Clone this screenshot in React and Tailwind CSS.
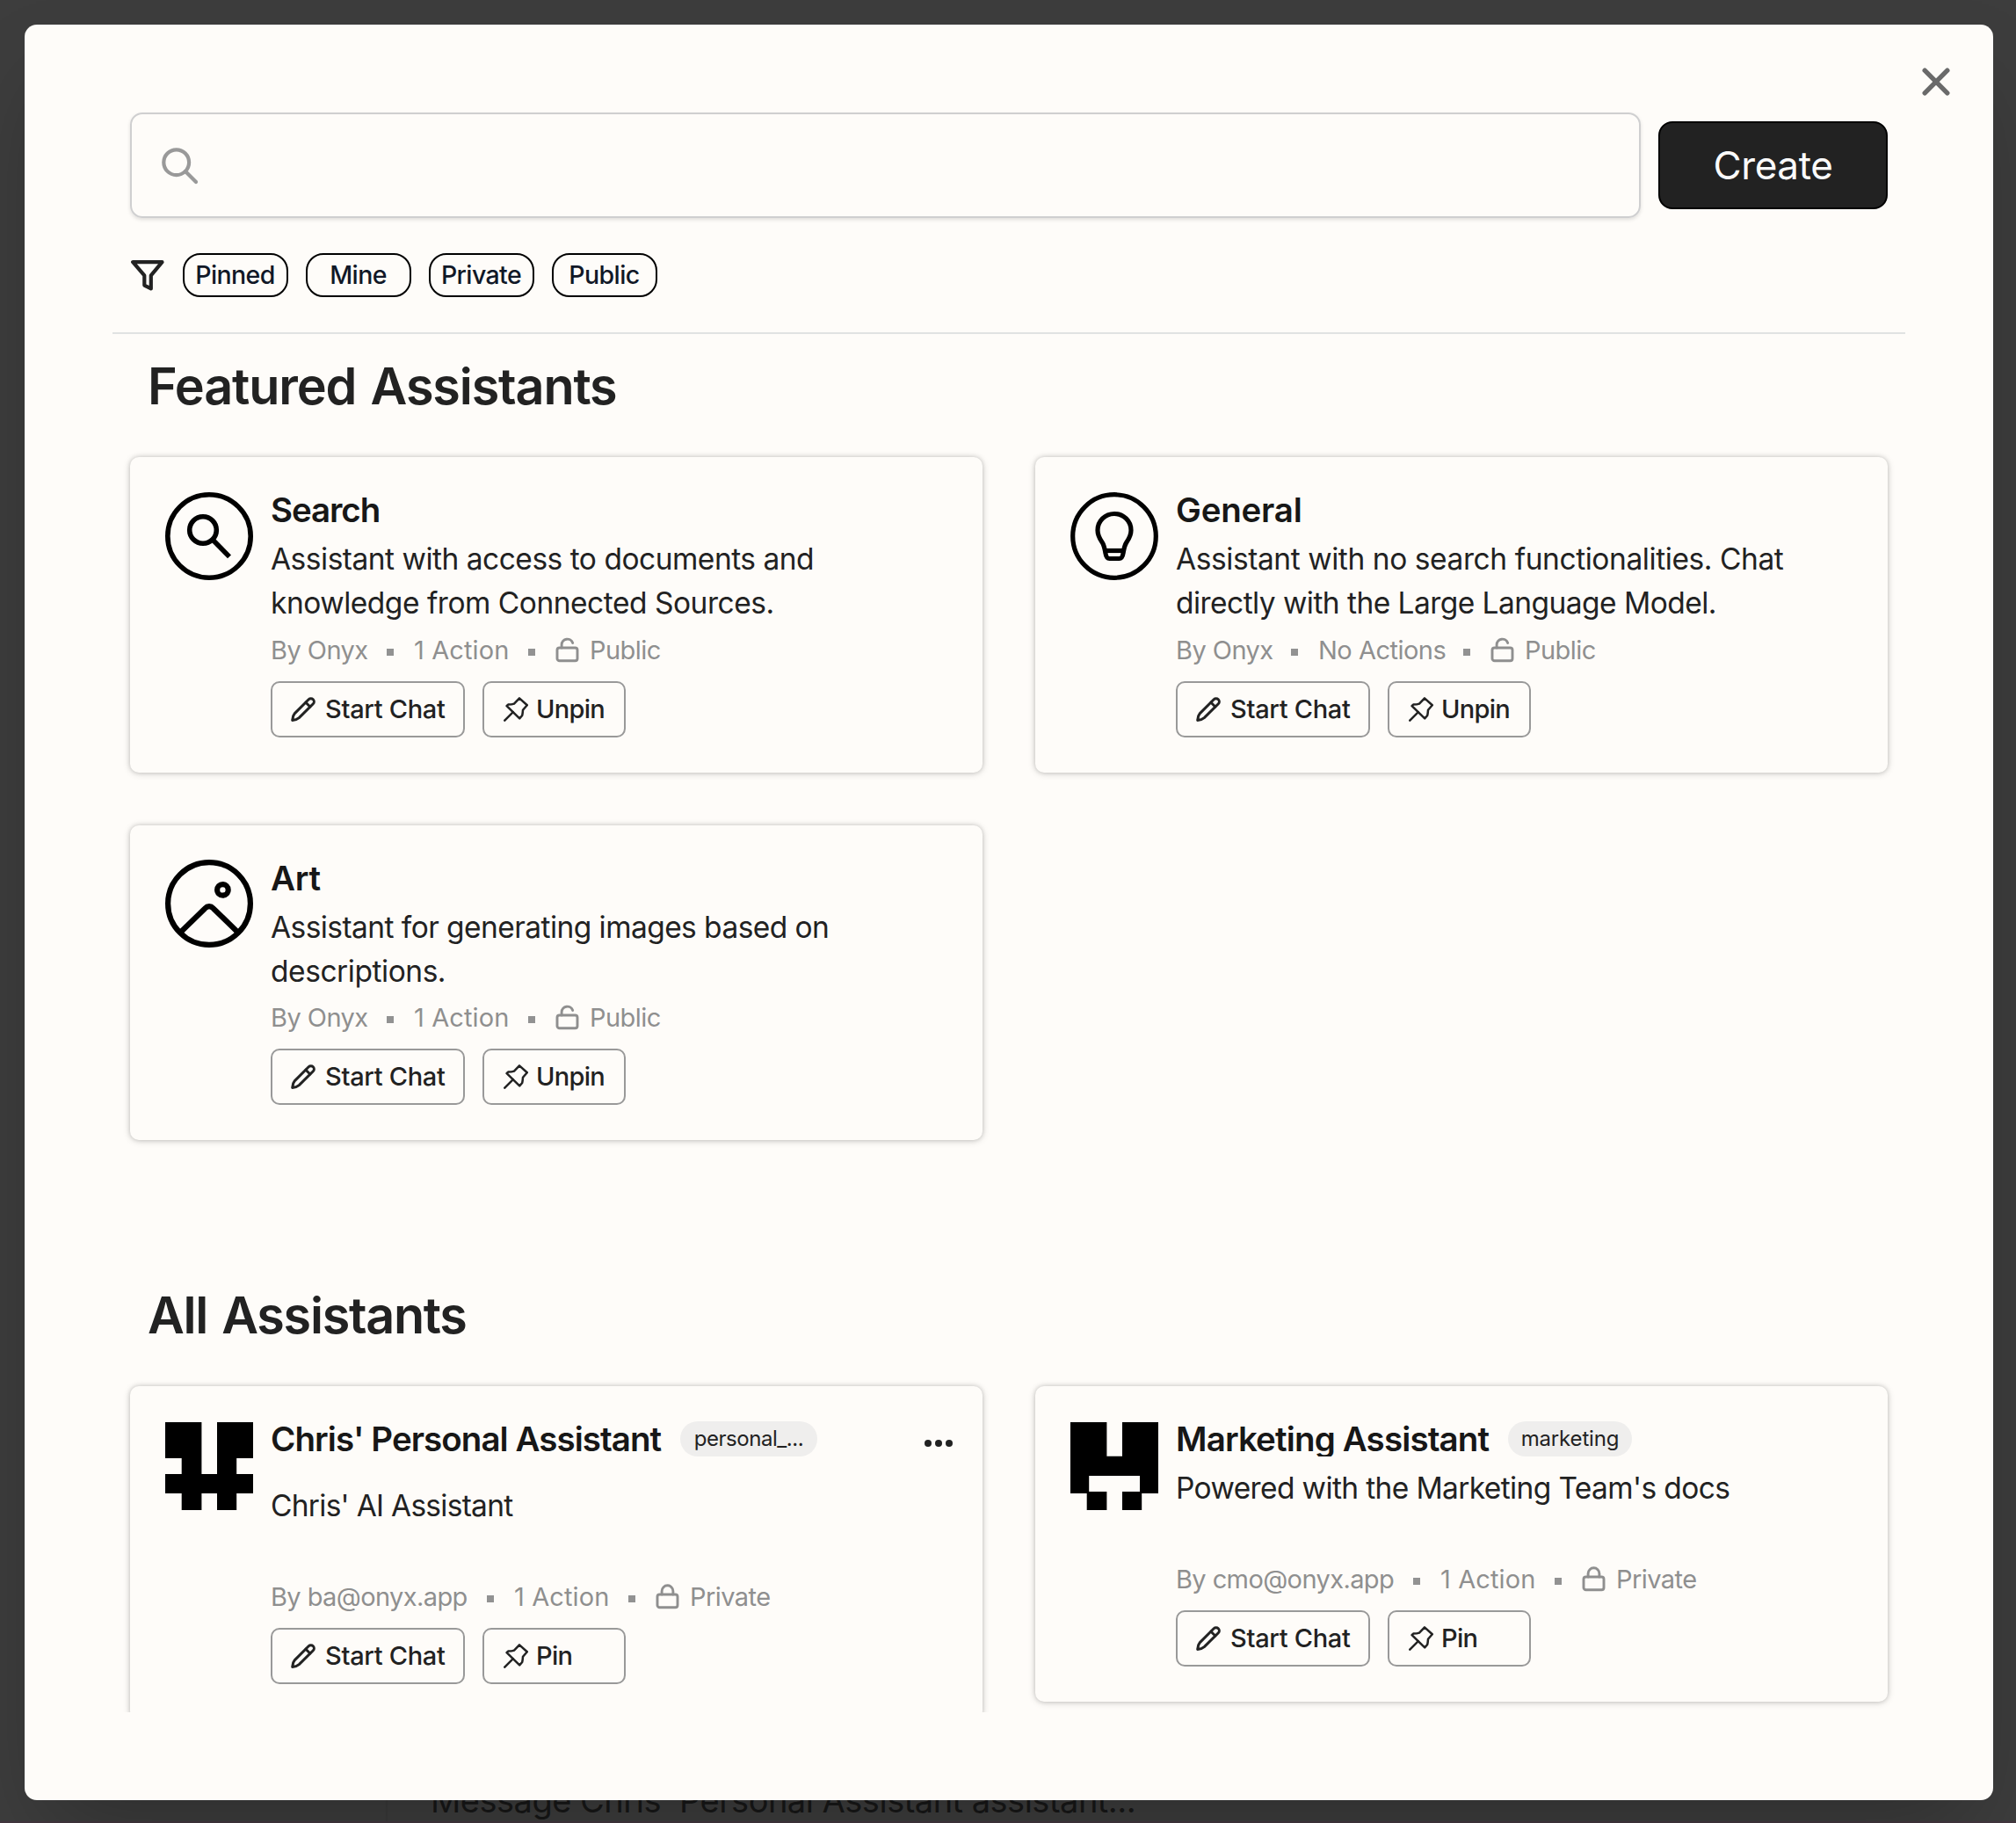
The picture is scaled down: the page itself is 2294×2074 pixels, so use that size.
import React from "react";

const stroke = { fill: "none", stroke: "currentColor", strokeLinecap: "round", strokeLinejoin: "round" };

function SearchIcon() {
  return (
    <svg className="mt-0.5 h-[42px] w-[42px] text-[#999999]" viewBox="0 0 42 42" {...stroke} strokeWidth="4.2">
      <circle cx="16.7" cy="16.7" r="14.4" />
      <path d="M27 27 39 39" />
    </svg>
  );
}

function CloseIcon() {
  return (
    <svg className="h-8 w-8 text-[#6a6a6a]" viewBox="0 0 32 32" {...stroke} strokeWidth="5.4">
      <path d="M3.2 3.2 28.8 28.8M28.8 3.2 3.2 28.8" />
    </svg>
  );
}

function FilterIcon() {
  return (
    <svg className="mt-px h-[35px] w-[38px] text-[#222222]" viewBox="0 0 38 35" {...stroke} strokeWidth="4.2">
      <path d="M2.2 2.2H35.5L22.8 17.4V32.4L15.3 28.6V17.4Z" />
    </svg>
  );
}

function PencilIcon() {
  return (
    <svg className="h-7 w-7 shrink-0" viewBox="0 0 28 28" {...stroke} strokeWidth="3">
      <path d="M20.2 2.7a3.55 3.55 0 0 1 5.1 5.1L9.3 23.6Q6.5 26 1.7 26.4 1.9 21.5 4.4 18.6Z" />
      <path d="M17 6.2 21.8 11" />
    </svg>
  );
}

function PinIcon() {
  return (
    <svg className="h-7 w-7 shrink-0" viewBox="0 0 28 28" {...stroke} strokeWidth="2.5">
      <path d="M18 1.4 26.8 9.3 22 14.8Q21.7 19 21.2 21L18.2 24.4 3.6 10.2 5.2 8.6Q9.5 8.6 12 7.6Z" />
      <path d="M10.8 17.2 1.3 26.7" />
    </svg>
  );
}

function LockIcon({ open }) {
  return (
    <svg className="-mt-px h-[29px] w-[27px] shrink-0" viewBox="0 0 26 29" {...stroke} strokeWidth="2.9">
      <rect x="1.5" y="12" width="23" height="14.8" rx="2.6" />
      {open ? <path d="M6.6 12V8.4a6.5 6.5 0 0 1 12.6-2" /> : <path d="M6.6 12V8.2a6.4 6.4 0 0 1 12.8 0V12" />}
    </svg>
  );
}

function SearchAvatar() {
  return (
    <svg className="h-[100px] w-[100px]" viewBox="0 0 100 100" fill="none" stroke="black" strokeWidth="5.6">
      <circle cx="50" cy="50" r="47.2" />
      <circle cx="43" cy="43" r="15.3" />
      <path d="M54 54 73 73.4" />
    </svg>
  );
}

function BulbAvatar() {
  return (
    <svg className="h-[100px] w-[100px]" viewBox="0 0 100 100" fill="none" stroke="black" strokeWidth="5.2" strokeLinejoin="round">
      <circle cx="50" cy="50" r="47.3" />
      <path d="M50 24.5c-10.5 0-19 8.3-19 18.8 0 6.5 2.6 10 5 13.4 2.4 3.5 2.9 6.3 3.9 12.5.7 4.6 1.6 6.3 4.6 6.3h11c3 0 3.9-1.7 4.6-6.3 1-6.2 1.5-9 3.9-12.5 2.4-3.4 5-6.9 5-13.4 0-10.5-8.5-18.8-19-18.8Z" />
      <path d="M39.5 66.5H60.5" />
    </svg>
  );
}

function ArtAvatar() {
  return (
    <svg className="-mt-px h-[100px] w-[100px]" viewBox="0 0 100 100" fill="none" stroke="black" strokeWidth="6.2">
      <circle cx="50" cy="50" r="46.9" />
      <circle cx="65.4" cy="34.4" r="6.3" />
      <path d="M16.5 83.5 45 55.7Q50 50.6 55 55.7L83.5 83.5" />
    </svg>
  );
}

function ChrisAvatar() {
  return (
    <svg className="mt-px h-[100px] w-[100px]" viewBox="0 0 100 100" fill="black">
      <path d="M0 0H41.4V59H59V0H100V41H81.2V59H100V81H81.2V100H59V81H41.4V100H18.7V81H0V59H18.7V41H0Z" />
    </svg>
  );
}

function MarketingAvatar() {
  return (
    <svg className="mt-px h-[100px] w-[100px]" viewBox="0 0 100 100" fill="black">
      <path d="M0 0H41.4V38.8H59V0H100V81H81.2V100H59V79H79V61H21.2V79H41.4V100H18.7V81H0Z" />
    </svg>
  );
}

function Dot() {
  return <span className="mt-[4px] mr-[23px] ml-[22px] h-[8px] w-[8px] shrink-0 bg-[#929292]" />;
}

function AssistantCard({ avatar, name, nameClass, badge, badgeClass, menu, lines, owner, ownerClass, actions, actionsClass, isPublic, pinned, tall }) {
  return (
    <article
      className={
        (tall ? "h-[379px] " : "h-[358.5px] ") +
        "flex gap-5 rounded-[10px] bg-[#fefcf9] p-10 shadow-[0_0_5px_rgba(0,0,0,0.16),0_1px_9px_rgba(0,0,0,0.16)]"
      }
    >
      <div className="shrink-0">{avatar}</div>
      <div className="flex min-w-0 flex-1 flex-col">
        <div className="flex h-10 items-center">
          <h3 className={"text-[38.5px] leading-10 font-semibold whitespace-nowrap text-[#171717] " + nameClass}>{name}</h3>
          {badge && (
            <span className={"ml-[21px] flex h-10 shrink-0 items-center justify-center rounded-[20px] bg-[#efeeed] text-[24px] text-[#222222] " + badgeClass}>{badge}</span>
          )}
          {menu && (
            <span className="mt-[10px] -mr-[6px] ml-auto flex gap-[3.5px]">
              <i className="h-[8.5px] w-[8.5px] rounded-full bg-[#222222]" />
              <i className="h-[8.5px] w-[8.5px] rounded-full bg-[#222222]" />
              <i className="h-[8.5px] w-[8.5px] rounded-full bg-[#222222]" />
            </span>
          )}
        </div>
        <div className={(tall ? "mt-[31px] " : "mt-[11px] ") + "h-[100px] text-[33.5px] leading-[50px] whitespace-nowrap text-[#222222]"}>
          {lines.map(([text, track]) => (
            <p key={text} className={track}>{text}</p>
          ))}
        </div>
        <div className="mt-[8.5px] flex h-10 items-center text-[29px] leading-10 whitespace-nowrap text-[#8f8f8f]">
          <span className={ownerClass}>{owner}</span>
          <Dot />
          <span className={actionsClass}>{actions}</span>
          <Dot />
          <LockIcon open={isPublic} />
          <span className="ml-[12px] tracking-[-0.55px]">{isPublic ? "Public" : "Private"}</span>
        </div>
        <div className="mt-[15px] flex gap-5 text-[29px] font-medium text-[#222222]">
          <button className="flex h-[64px] w-[221px] items-center gap-[11px] rounded-[10px] border-2 border-[#999999] pl-[21px] tracking-[-0.3px] whitespace-nowrap">
            <PencilIcon />
            Start Chat
          </button>
          <button className="flex h-[64px] w-[163px] items-center gap-[9px] rounded-[10px] border-2 border-[#999999] pl-[22px] tracking-[-0.7px]">
            <PinIcon />
            {pinned ? "Unpin" : "Pin"}
          </button>
        </div>
      </div>
    </article>
  );
}

export default function App() {
  return (
    <div className="relative h-[2074px] w-full overflow-hidden bg-[#3d3d3d] font-['Inter',sans-serif]">
      <div className="absolute inset-x-0 bottom-0 h-[97px] border-b-2 border-[#43373f]">
        <div className="ml-[439px] h-full border-l-2 border-[#393939] pt-[47px] pl-[49px] text-[38px] leading-[48px] tracking-[-0.5px] whitespace-nowrap text-[#171717]">
          Message Chris' Personal Assistant assistant...
        </div>
      </div>

      <main className="relative mx-7 mt-7 mr-[26px] flex h-[2020px] flex-col rounded-[14px] bg-[#fefcf9] px-[100px] pt-[100px] shadow-[0_50px_100px_-24px_rgba(0,0,0,0.25)]">
        <button className="absolute top-[49px] right-[49px]" aria-label="Close">
          <CloseIcon />
        </button>

        <div className="flex h-[120px] items-center gap-5 px-5">
          <div className="flex h-[120px] flex-1 items-center rounded-[14px] border-2 border-[#cfcfd0] pl-[34px] shadow-[0_2px_4px_rgba(0,0,0,0.12)]">
            <SearchIcon />
          </div>
          <button className="h-[100px] w-[261px] rounded-[16px] border-2 border-black bg-[#222222] text-[44px] tracking-[-0.4px] text-[#fafafa]">Create</button>
        </div>

        <div className="mt-10 flex h-[50px] items-center gap-5 px-5 text-[28.5px] font-medium tracking-[-0.6px] text-[#111827]">
          <div className="w-10 pl-px">
            <FilterIcon />
          </div>
          {["Pinned", "Mine", "Private", "Public"].map((label) => (
            <button key={label} className="flex h-[50px] w-[120px] items-center justify-center rounded-[20px] border-2 border-black pr-px">
              {label}
            </button>
          ))}
        </div>

        <div className="mt-10 h-0.5 shrink-0 bg-[#e0e2e2]" />

        <section className="h-[1568px] overflow-hidden pt-[18.5px]">
          <h2 className="pl-[40px] text-[57.5px] leading-[80px] font-semibold tracking-[-1.15px] [word-spacing:3px] text-[#222222]">Featured Assistants</h2>
          <div className="mt-[41.5px] grid grid-cols-2 gap-[60px] px-5">
            <AssistantCard
              avatar={<SearchAvatar />}
              name="Search"
              nameClass="tracking-[-1.1px]"
              lines={[["Assistant with access to documents and", "tracking-[-0.49px]"], ["knowledge from Connected Sources.", "tracking-[-0.48px]"]]}
              owner="By Onyx"
              ownerClass="w-[110px] tracking-[-0.55px]"
              actions="1 Action"
              actionsClass="w-[108px] tracking-[0.1px]"
              isPublic
              pinned
            />
            <AssistantCard
              avatar={<BulbAvatar />}
              name="General"
              nameClass="tracking-[-0.2px]"
              lines={[["Assistant with no search functionalities. Chat", "tracking-[-0.42px]"], ["directly with the Large Language Model.", "tracking-[-0.54px]"]]}
              owner="By Onyx"
              ownerClass="w-[109px] tracking-[-0.55px]"
              actions="No Actions"
              actionsClass="w-[143px] tracking-[-0.5px]"
              isPublic
              pinned
            />
            <AssistantCard
              avatar={<ArtAvatar />}
              name="Art"
              nameClass="tracking-[-0.2px]"
              lines={[["Assistant for generating images based on", "tracking-[-0.56px]"], ["descriptions.", "tracking-[-0.45px]"]]}
              owner="By Onyx"
              ownerClass="w-[110px] tracking-[-0.55px]"
              actions="1 Action"
              actionsClass="w-[108px] tracking-[0.1px]"
              isPublic
              pinned
            />
          </div>

          <h2 className="mt-[158.5px] pl-[40px] text-[57.5px] leading-[80px] font-semibold tracking-[-1.3px] [word-spacing:3px] text-[#222222]">All Assistants</h2>
          <div className="mt-[41.5px] grid grid-cols-2 items-start gap-[60px] px-5">
            <AssistantCard
              avatar={<ChrisAvatar />}
              name="Chris' Personal Assistant"
              nameClass="w-[445px] tracking-[-0.94px]"
              badge="personal_..."
              badgeClass="w-[156px] tracking-[-0.45px]"
              menu
              tall
              lines={[["Chris' AI Assistant", "tracking-[-0.72px]"]]}
              owner="By ba@onyx.app"
              ownerClass="w-[224px] tracking-[-0.6px]"
              actions="1 Action"
              actionsClass="w-[108px] tracking-[0.1px]"
            />
            <AssistantCard
              avatar={<MarketingAvatar />}
              name="Marketing Assistant"
              nameClass="h-10 w-[357px] overflow-hidden tracking-[-0.86px]"
              badge="marketing"
              badgeClass="w-[141px] tracking-[-0.15px]"
              lines={[["Powered with the Marketing Team's docs", "tracking-[-0.62px]"]]}
              owner="By cmo@onyx.app"
              ownerClass="w-[248px] tracking-[-0.6px]"
              actions="1 Action"
              actionsClass="w-[108px] tracking-[0.1px]"
            />
          </div>
        </section>
      </main>
    </div>
  );
}
